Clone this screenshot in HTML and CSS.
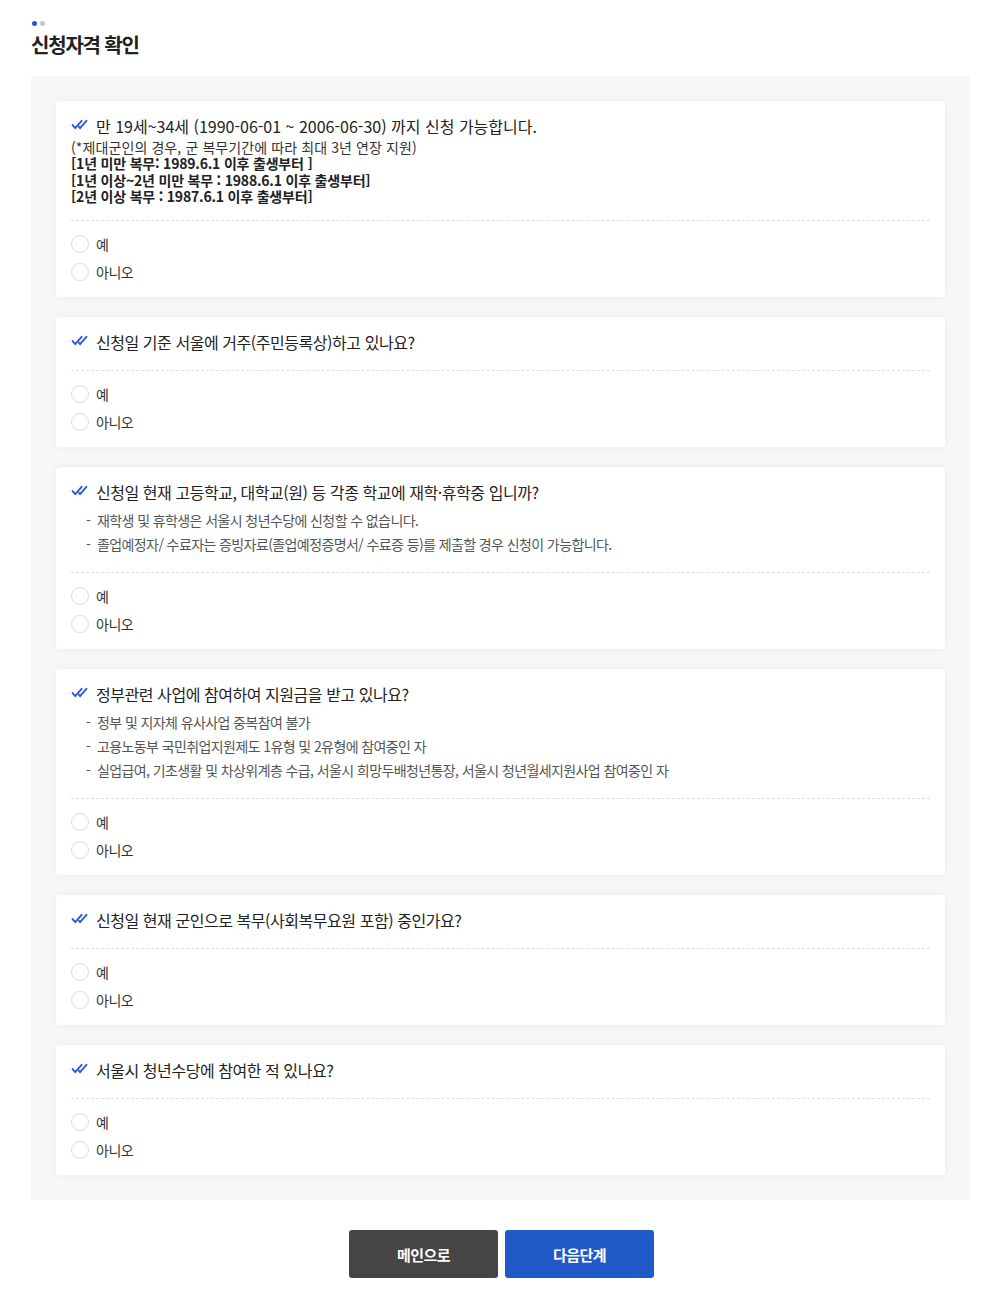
FILE: index.html
```html
<!DOCTYPE html>
<html lang="ko">
<head>
<meta charset="utf-8">
<title>신청자격 확인</title>
<link rel="stylesheet" href="styles.css">
</head>
<body>
<div class="page">
  <div class="dots"><span class="dot blue"></span><span class="dot gray"></span></div>
  <h1 class="title">신청자격 확인</h1>

  <div class="panel">
    <div class="card">
      <div class="head">
        <p class="q q-wide"><svg class="chk" viewBox="0 0 16 10"><path d="M1.5 5.5 L4 8.5 L10 1.5 M7.5 7.3 L8.5 8.5 L14.5 1.5"/></svg>만 19세~34세 (1990-06-01 ~ 2006-06-30) 까지 신청 가능합니다.</p>
        <div class="sub">
          <p>(*제대군인의 경우, 군 복무기간에 따라 최대 3년 연장 지원)</p>
          <p class="b">[1년 미만 복무: 1989.6.1 이후 출생부터 ]</p>
          <p class="b">[1년 이상~2년 미만 복무 : 1988.6.1 이후 출생부터]</p>
          <p class="b">[2년 이상 복무 : 1987.6.1 이후 출생부터]</p>
        </div>
      </div>
      <div class="opts">
        <label class="opt"><span class="radio"></span>예</label>
        <label class="opt"><span class="radio"></span>아니오</label>
      </div>
    </div>

    <div class="card">
      <div class="head">
        <p class="q"><svg class="chk" viewBox="0 0 16 10"><path d="M1.5 5.5 L4 8.5 L10 1.5 M7.5 7.3 L8.5 8.5 L14.5 1.5"/></svg>신청일 기준 서울에 거주(주민등록상)하고 있나요?</p>
      </div>
      <div class="opts">
        <label class="opt"><span class="radio"></span>예</label>
        <label class="opt"><span class="radio"></span>아니오</label>
      </div>
    </div>

    <div class="card">
      <div class="head">
        <p class="q"><svg class="chk" viewBox="0 0 16 10"><path d="M1.5 5.5 L4 8.5 L10 1.5 M7.5 7.3 L8.5 8.5 L14.5 1.5"/></svg>신청일 현재 고등학교, 대학교(원) 등 각종 학교에 재학·휴학중 입니까?</p>
        <ul class="list">
          <li>재학생 및 휴학생은 서울시 청년수당에 신청할 수 없습니다.</li>
          <li>졸업예정자/ 수료자는 증빙자료(졸업예정증명서/ 수료증 등)를 제출할 경우 신청이 가능합니다.</li>
        </ul>
      </div>
      <div class="opts">
        <label class="opt"><span class="radio"></span>예</label>
        <label class="opt"><span class="radio"></span>아니오</label>
      </div>
    </div>

    <div class="card">
      <div class="head">
        <p class="q"><svg class="chk" viewBox="0 0 16 10"><path d="M1.5 5.5 L4 8.5 L10 1.5 M7.5 7.3 L8.5 8.5 L14.5 1.5"/></svg>정부관련 사업에 참여하여 지원금을 받고 있나요?</p>
        <ul class="list">
          <li>정부 및 지자체 유사사업 중복참여 불가</li>
          <li>고용노동부 국민취업지원제도 1유형 및 2유형에 참여중인 자</li>
          <li>실업급여, 기초생활 및 차상위계층 수급, 서울시 희망두배청년통장, 서울시 청년월세지원사업 참여중인 자</li>
        </ul>
      </div>
      <div class="opts">
        <label class="opt"><span class="radio"></span>예</label>
        <label class="opt"><span class="radio"></span>아니오</label>
      </div>
    </div>

    <div class="card">
      <div class="head">
        <p class="q"><svg class="chk" viewBox="0 0 16 10"><path d="M1.5 5.5 L4 8.5 L10 1.5 M7.5 7.3 L8.5 8.5 L14.5 1.5"/></svg>신청일 현재 군인으로 복무(사회복무요원 포함) 중인가요?</p>
      </div>
      <div class="opts">
        <label class="opt"><span class="radio"></span>예</label>
        <label class="opt"><span class="radio"></span>아니오</label>
      </div>
    </div>

    <div class="card">
      <div class="head">
        <p class="q"><svg class="chk" viewBox="0 0 16 10"><path d="M1.5 5.5 L4 8.5 L10 1.5 M7.5 7.3 L8.5 8.5 L14.5 1.5"/></svg>서울시 청년수당에 참여한 적 있나요?</p>
      </div>
      <div class="opts">
        <label class="opt"><span class="radio"></span>예</label>
        <label class="opt"><span class="radio"></span>아니오</label>
      </div>
    </div>
  </div>

  <div class="btns">
    <button class="btn dark">메인으로</button>
    <button class="btn blue">다음단계</button>
  </div>
</div>
</body>
</html>
```

FILE: styles.css
```css
* { box-sizing: border-box; margin: 0; padding: 0; }
body {
  font-family: "Noto Sans CJK KR", "Noto Sans", sans-serif;
  color: #222;
  background: #fff;
}
.page { padding: 21px 28px 16px 31px; }
.dots { display: flex; gap: 3px; height: 5px; padding-left: 1px; }
.dot { width: 5px; height: 5px; border-radius: 50%; }
.dot.blue { background: #2259c9; }
.dot.gray { background: #c4c4c4; }
.title {
  font-size: 20px;
  font-weight: 700;
  line-height: 28px;
  margin-top: 5px;
  letter-spacing: -1.2px;
  color: #222;
}
.panel {
  margin-top: 17px;
  background: #f7f7f7;
  padding: 25px;
  display: flex;
  flex-direction: column;
  gap: 20px;
}
.card {
  background: #fff;
  border-radius: 4px;
  box-shadow: 0 0 6px rgba(0,0,0,0.06);
  padding: 13px 15px 11px 15px;
}
.head {
  padding-bottom: 16px;
  border-bottom: 1px dashed #dedede;
}
.q {
  display: flex;
  align-items: center;
  font-size: 16px;
  line-height: 24px;
  letter-spacing: -0.45px;
  color: #222;
}
.q.q-wide { letter-spacing: 0; }
.chk {
  width: 17px;
  height: 11px;
  margin-right: 8px;
  margin-top: -4px;
  fill: none;
  stroke: #2a5bd7;
  stroke-width: 1.8;
  stroke-linecap: round;
  stroke-linejoin: round;
}
.sub { margin-top: 1px; }
.sub p {
  font-size: 14px;
  line-height: 16.25px;
  letter-spacing: 0.1px;
  color: #333;
}
.sub p.b { font-weight: 700; color: #222; letter-spacing: -0.2px; }
.list { list-style: none; margin-top: 4px; padding-left: 15px; }
.list li {
  font-size: 14px;
  line-height: 24px;
  color: #555;
  letter-spacing: -0.6px;
  position: relative;
  padding-left: 11px;
}
.list li::before {
  content: "-";
  position: absolute;
  left: 0;
  top: 0;
}
.opts { padding-top: 9px; }
.opt {
  display: flex;
  align-items: center;
  height: 28px;
  font-size: 14px;
  color: #333;
  letter-spacing: -0.5px;
}
.radio {
  width: 18px;
  height: 18px;
  border: 1px solid #dcdcdc;
  border-radius: 50%;
  margin-right: 7px;
  background: #fff;
}
.btns {
  display: flex;
  justify-content: center;
  gap: 7px;
  margin-top: 30px;
  padding-left: 2px;
}
.btn {
  width: 149px;
  height: 48px;
  border: none;
  border-radius: 3px;
  font-family: "Noto Sans CJK KR", sans-serif;
  font-size: 15px;
  font-weight: 700;
  color: #fff;
  letter-spacing: -0.6px;
}
.btn.dark { background: #454545; }
.btn.blue { background: #2259c9; }
```
